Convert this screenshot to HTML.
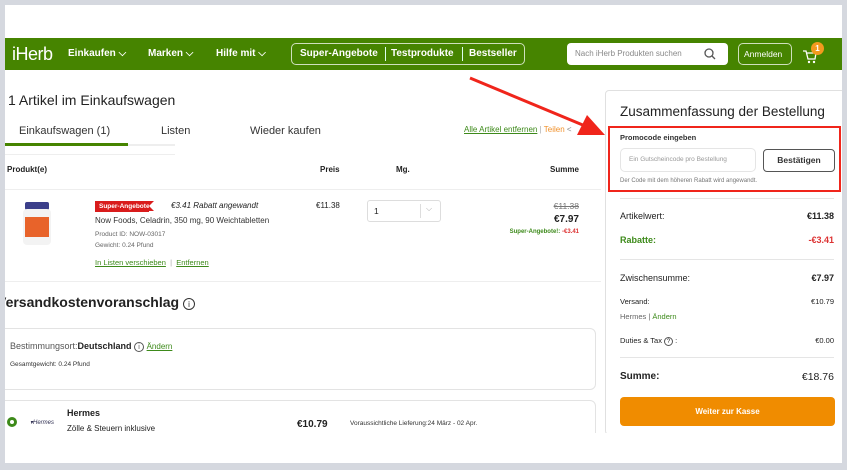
<!DOCTYPE html>
<html><head><meta charset="utf-8"><style>
*{box-sizing:border-box;margin:0;padding:0}
body{width:847px;height:470px;background:#d5d8df;font-family:"Liberation Sans",sans-serif;position:relative;overflow:hidden;color:#222}
.page{position:absolute;left:5px;top:5px;width:837px;height:458px;background:#fff;overflow:hidden}
.abs{position:absolute;white-space:nowrap}
.nav{position:absolute;left:0;top:33px;width:837px;height:32px;background:#468400;color:#fff}
.nav .abs{font-weight:bold;font-size:10px;top:10px}
.g{color:#3d8a1a;text-decoration:underline}
</style></head><body><div class="page">
<div class="nav">
 <div class="abs" style="left:7px;top:6px;font-size:18px;font-weight:normal;letter-spacing:-0.5px">iHerb</div>
 <div class="abs" style="left:63px">Einkaufen ⌵</div>
 <div class="abs" style="left:143px">Marken ⌵</div>
 <div class="abs" style="left:211px">Hilfe mit ⌵</div>
 <div class="abs" style="left:286px;top:5px;width:234px;height:22px;border:1px solid #cfe0bd;border-radius:5px"></div>
 <div class="abs" style="left:295px">Super-Angebote</div>
 <div class="abs" style="left:380px;top:9px;width:1px;height:14px;background:#dfe"></div>
 <div class="abs" style="left:386px">Testprodukte</div>
 <div class="abs" style="left:457px;top:9px;width:1px;height:14px;background:#dfe"></div>
 <div class="abs" style="left:464px">Bestseller</div>
 <div class="abs" style="left:562px;top:5px;width:161px;height:22px;background:#fff;border-radius:4px"></div>
 <div class="abs" style="left:570px;top:11px;font-size:8px;font-weight:normal;color:#888">Nach iHerb Produkten suchen</div>
 <svg class="abs" style="left:699px;top:10px" width="12" height="12"><circle cx="5" cy="5" r="4" fill="none" stroke="#555" stroke-width="1.3"/><line x1="8" y1="8" x2="11" y2="11" stroke="#555" stroke-width="1.3"/></svg>
 <div class="abs" style="left:733px;top:5px;width:54px;height:22px;border:1px solid #cfe0bd;border-radius:5px"></div>
 <div class="abs" style="left:739px;top:11px;font-size:8.5px;font-weight:normal">Anmelden</div>
 <svg class="abs" style="left:797px;top:11px" width="16" height="16"><path d="M1 2h3l2 8h7l1-6H5" fill="none" stroke="#fff" stroke-width="1.3"/><circle cx="7" cy="13" r="1.2" fill="#fff"/><circle cx="12" cy="13" r="1.2" fill="#fff"/></svg>
 <div class="abs" style="left:806px;top:4px;width:13px;height:13px;border-radius:50%;background:#f39a1e;font-size:8px;text-align:center;line-height:13px">1</div>
</div>
<div class="abs" style="left:3px;top:87px;font-size:14px;color:#222">1 Artikel im Einkaufswagen</div>
<div class="abs" style="left:14px;top:120px;font-size:11px;color:#333">Einkaufswagen (1)</div>
<div class="abs" style="left:156px;top:120px;font-size:11px;color:#333">Listen</div>
<div class="abs" style="left:245px;top:120px;font-size:11px;color:#333">Wieder kaufen</div>
<div class="abs" style="left:0;top:138px;width:123px;height:3px;background:#468400"></div>
<div class="abs" style="left:123px;top:139px;width:47px;height:2px;background:#eee"></div>
<div class="abs" style="left:459px;top:120px;font-size:8px" ><span class="g">Alle Artikel entfernen</span> <span style="color:#aaa">|</span> <span style="color:#f0902a">Teilen</span> <span style="color:#888">&lt;</span></div>
<div class="abs" style="left:0;top:149px;width:170px;height:1px;background:#eee"></div>
<div class="abs" style="left:2px;top:160px;font-size:8px;font-weight:bold">Produkt(e)</div>
<div class="abs" style="left:315px;top:160px;font-size:8px;font-weight:bold">Preis</div>
<div class="abs" style="left:391px;top:160px;font-size:8px;font-weight:bold">Mg.</div>
<div class="abs" style="left:545px;top:160px;font-size:8px;font-weight:bold">Summe</div>
<div class="abs" style="left:0;top:184px;width:596px;height:1px;background:#eee"></div>
<div class="abs" style="left:20px;top:197px;width:24px;height:8px;background:#3b3f8a;border-radius:2px"></div>
<div class="abs" style="left:18px;top:204px;width:28px;height:36px;background:#f3f3f3;border-radius:4px"></div>
<div class="abs" style="left:20px;top:212px;width:24px;height:20px;background:#e8632a"></div>
<div class="abs" style="left:90px;top:196px;width:54px;height:11px;background:#d91c1c;color:#fff;font-size:6.5px;font-weight:bold;line-height:11px;padding-left:4px">Super-Angebote!</div>
<div class="abs" style="left:144px;top:196px;width:0;height:0;border-top:5.5px solid #d91c1c;border-bottom:5.5px solid #d91c1c;border-right:5px solid transparent"></div>
<div class="abs" style="left:166px;top:196px;font-size:8px;font-style:italic">€3.41 Rabatt angewandt</div>
<div class="abs" style="left:90px;top:211px;font-size:8px;color:#333">Now Foods, Celadrin, 350 mg, 90 Weichtabletten</div>
<div class="abs" style="left:90px;top:226px;font-size:6.5px;color:#666">Product ID: NOW-03017</div>
<div class="abs" style="left:90px;top:237px;font-size:6.5px;color:#666">Gewicht: 0.24 Pfund</div>
<div class="abs" style="left:90px;top:253px;font-size:7.5px"><span class="g">In Listen verschieben</span> <span style="color:#aaa">&nbsp;|&nbsp;</span> <span class="g">Entfernen</span></div>
<div class="abs" style="left:311px;top:196px;font-size:8px">€11.38</div>
<div class="abs" style="left:362px;top:195px;width:74px;height:22px;border:1px solid #ddd;border-radius:3px"></div>
<div class="abs" style="left:369px;top:201px;font-size:8.5px">1</div>
<div class="abs" style="left:415px;top:199px;width:1px;height:14px;background:#ddd"></div>
<div class="abs" style="left:421px;top:199px;font-size:8px;color:#aaa">⌵</div>
<div class="abs" style="right:263px;top:196px;font-size:8.5px;color:#777;text-decoration:line-through">€11.38</div>
<div class="abs" style="right:263px;top:209px;font-size:10px;font-weight:bold">€7.97</div>
<div class="abs" style="right:263px;top:224px;font-size:6px;font-weight:bold"><span style="color:#3d8a1a">Super-Angebote!:</span> <span style="color:#d33">-€3.41</span></div>
<div class="abs" style="left:0;top:276px;width:596px;height:1px;background:#eee"></div>
<div class="abs" style="left:-8px;top:289px;font-size:14px;font-weight:bold;color:#222">Versandkostenvoranschlag <span style="font-weight:normal;border:1px solid #333;border-radius:50%;display:inline-block;width:12px;height:12px;line-height:11px;text-align:center;font-size:8px">i</span></div>
<div class="abs" style="left:-6px;top:323px;width:597px;height:62px;border:1px solid #e3e3e3;border-radius:6px"></div>
<div class="abs" style="left:5px;top:336px;font-size:9px;color:#555">Bestimmungsort:<b style="color:#222">Deutschland</b> <span style="border:1px solid #555;border-radius:50%;display:inline-block;width:10px;height:10px;font-size:7px;text-align:center;line-height:9px">i</span> <span class="g" style="font-size:8px">Ändern</span></div>
<div class="abs" style="left:5px;top:356px;font-size:6.5px;color:#333">Gesamtgewicht: 0.24 Pfund</div>
<div class="abs" style="left:-6px;top:395px;width:597px;height:60px;border:1px solid #e3e3e3;border-radius:6px"></div>
<div class="abs" style="left:2px;top:412px;width:10px;height:10px;border-radius:50%;border:3px solid #3d8a1a"></div>
<div class="abs" style="left:25px;top:414px;font-size:6px;color:#335;font-style:italic">▾Hermes</div>
<div class="abs" style="left:62px;top:403px;font-size:9px;font-weight:bold">Hermes</div>
<div class="abs" style="left:62px;top:419px;font-size:8px">Zölle &amp; Steuern inklusive</div>
<div class="abs" style="left:292px;top:414px;font-size:10px;font-weight:bold">€10.79</div>
<div class="abs" style="left:345px;top:415px;font-size:6.5px;color:#333">Voraussichtliche Lieferung:24 März - 02 Apr.</div>
<div class="abs" style="left:0;top:428px;width:600px;height:30px;background:#fff"></div>
<!-- summary -->
<div class="abs" style="left:600px;top:85px;width:240px;height:345px;border:1px solid #e0e0e0;border-radius:4px"></div>
<div class="abs" style="left:615px;top:99px;font-size:13.5px;color:#222">Zusammenfassung der Bestellung</div>
<div class="abs" style="left:603px;top:121px;width:233px;height:66px;border:2px solid #f0251b"></div>
<div class="abs" style="left:615px;top:128px;font-size:7.5px;font-weight:bold;color:#333">Promocode eingeben</div>
<div class="abs" style="left:615px;top:143px;width:136px;height:24px;border:1px solid #e5e5e5;border-radius:5px"></div>
<div class="abs" style="left:624px;top:151px;font-size:6.5px;color:#999">Ein Gutscheincode pro Bestellung</div>
<div class="abs" style="left:758px;top:144px;width:72px;height:23px;border:1.5px solid #555;border-radius:4px;font-size:8.5px;font-weight:bold;color:#333;text-align:center;line-height:20px">Bestätigen</div>
<div class="abs" style="left:615px;top:173px;font-size:6px;color:#777">Der Code mit dem höheren Rabatt wird angewandt.</div>
<div class="abs" style="left:615px;top:193px;width:214px;height:1px;background:#e5e5e5"></div>
<div class="abs" style="left:615px;top:206px;font-size:9px">Artikelwert:</div>
<div class="abs" style="right:8px;top:206px;font-size:9px;font-weight:bold">€11.38</div>
<div class="abs" style="left:615px;top:230px;font-size:9px;font-weight:bold;color:#3d8a1a">Rabatte:</div>
<div class="abs" style="right:8px;top:230px;font-size:9px;font-weight:bold;color:#d33">-€3.41</div>
<div class="abs" style="left:615px;top:254px;width:214px;height:1px;background:#e5e5e5"></div>
<div class="abs" style="left:615px;top:268px;font-size:9px">Zwischensumme:</div>
<div class="abs" style="right:8px;top:268px;font-size:9px;font-weight:bold">€7.97</div>
<div class="abs" style="left:615px;top:292px;font-size:7.5px">Versand:</div>
<div class="abs" style="right:8px;top:292px;font-size:7.5px">€10.79</div>
<div class="abs" style="left:615px;top:307px;font-size:7.5px;color:#666">Hermes | <span style="color:#3d8a1a">Ändern</span></div>
<div class="abs" style="left:615px;top:331px;font-size:7.5px">Duties &amp; Tax <span style="border:1px solid #555;border-radius:50%;display:inline-block;width:9px;height:9px;font-size:6px;text-align:center;line-height:8px">?</span> :</div>
<div class="abs" style="right:8px;top:331px;font-size:7.5px">€0.00</div>
<div class="abs" style="left:615px;top:352px;width:214px;height:1px;background:#e5e5e5"></div>
<div class="abs" style="left:615px;top:366px;font-size:10px;font-weight:bold">Summe:</div>
<div class="abs" style="right:8px;top:366px;font-size:10.5px">€18.76</div>
<div class="abs" style="left:615px;top:392px;width:215px;height:29px;background:#f08c00;border-radius:4px;color:#fff;font-size:8px;font-weight:bold;text-align:center;line-height:29px">Weiter zur Kasse</div>
<div class="abs" style="left:600px;top:428px;width:242px;height:30px;background:#fff"></div>
<svg class="abs" style="left:460px;top:68px" width="150" height="70"><line x1="5" y1="5" x2="125" y2="55" stroke="#f0251b" stroke-width="3"/><polygon points="140,62 112,62 122,42" fill="#f0251b"/></svg>
</div></body></html>
